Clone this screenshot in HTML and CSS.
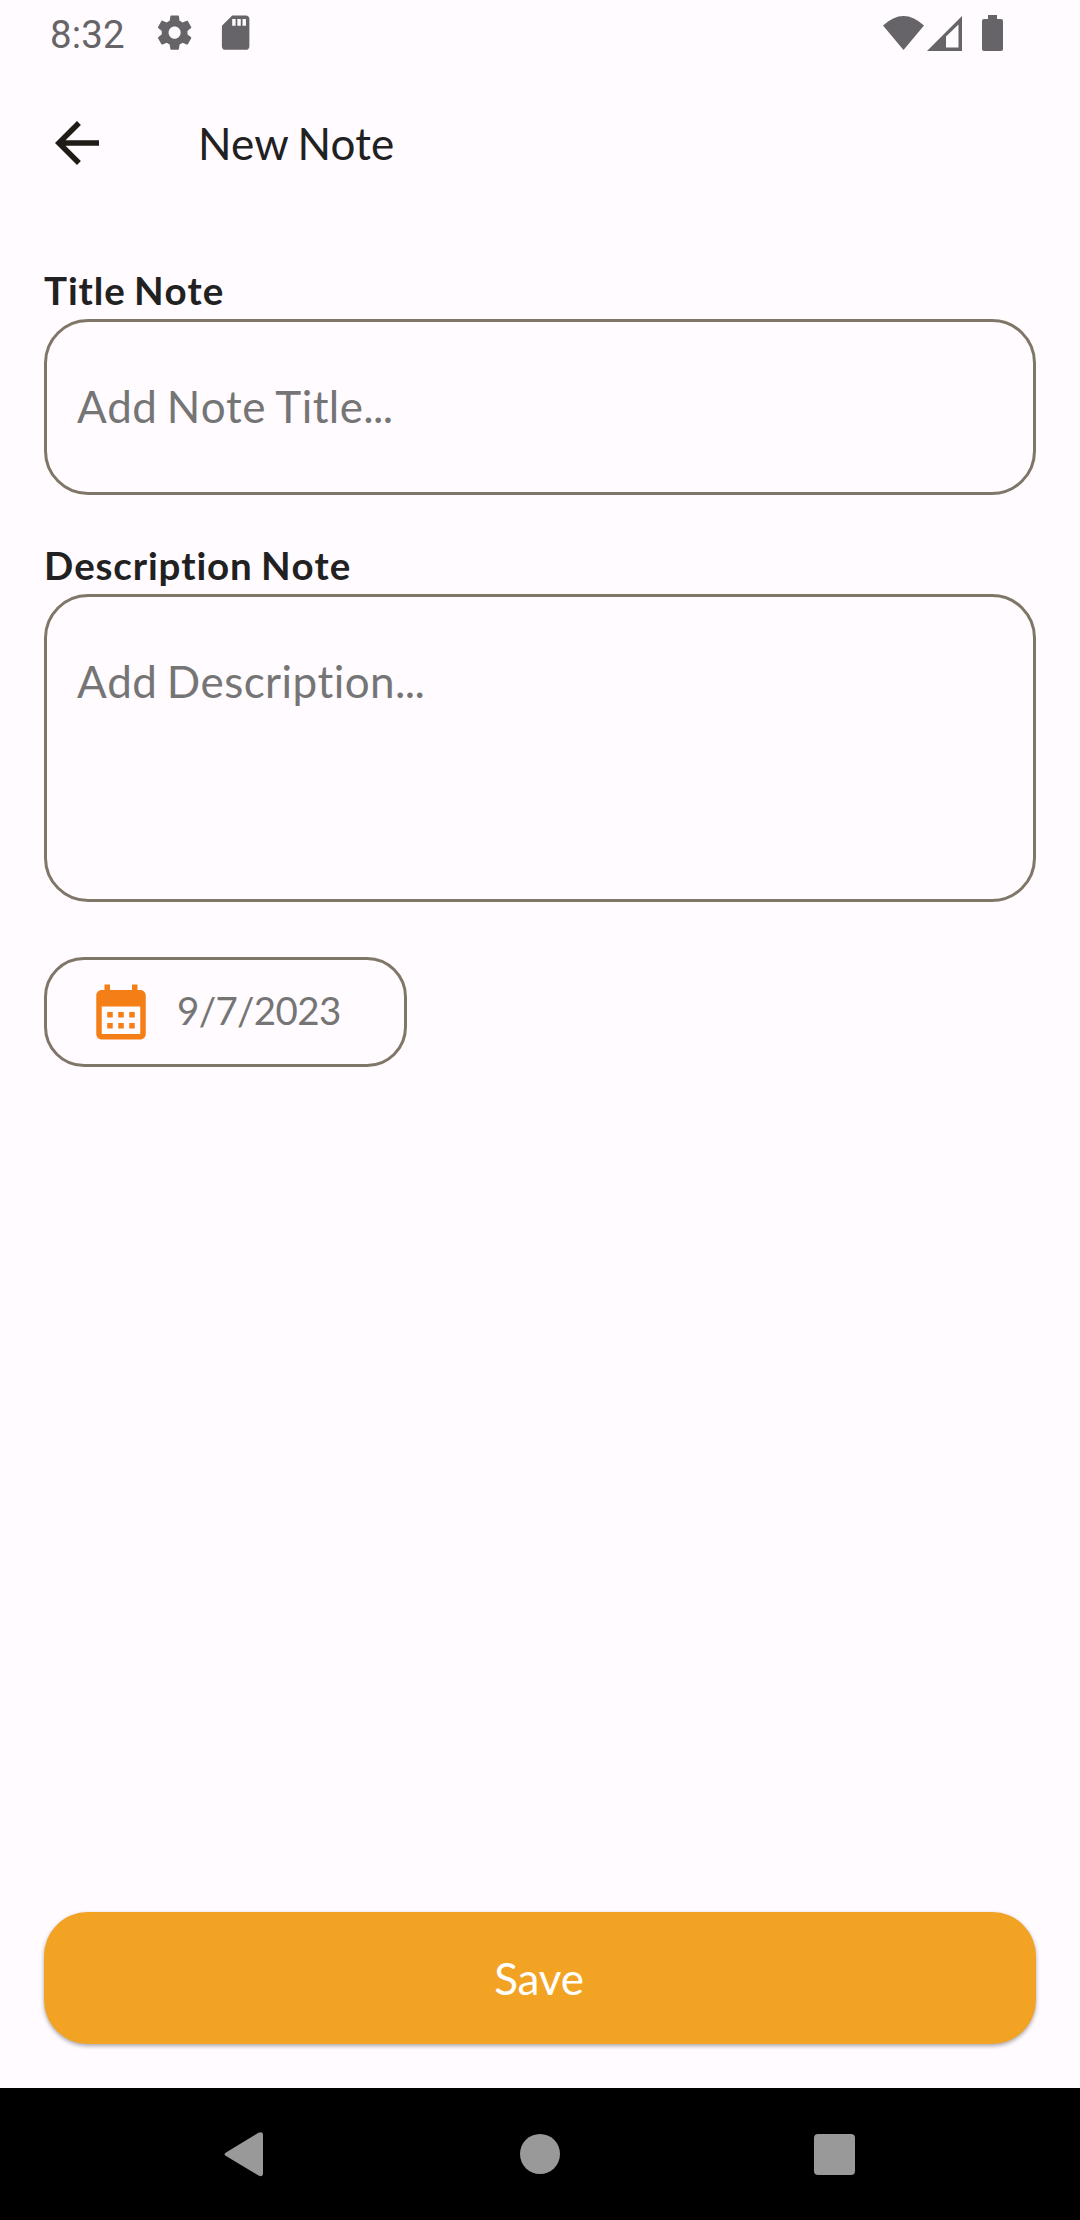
FILE: index.html
```html
<!DOCTYPE html>
<html lang="en">
<head>
<meta charset="utf-8">
<title>New Note</title>
<link rel="stylesheet" href="styles.css">
</head>
<body>
<div class="screen">
  <header class="status">
    <span class="clock">8:32</span>
    <svg class="gear" viewBox="0 0 24 24"><path d="M19.43 12.98c.04-.32.07-.64.07-.98s-.03-.66-.07-.98l2.11-1.65c.19-.15.24-.42.12-.64l-2-3.46c-.12-.22-.39-.3-.61-.22l-2.49 1c-.52-.4-1.08-.73-1.69-.98l-.38-2.65C14.46 2.18 14.25 2 14 2h-4c-.25 0-.46.18-.49.42l-.38 2.65c-.61.25-1.17.59-1.69.98l-2.49-1c-.23-.09-.49 0-.61.22l-2 3.46c-.13.22-.07.49.12.64l2.11 1.65c-.04.32-.07.65-.07.98s.03.66.07.98l-2.11 1.65c-.19.15-.24.42-.12.64l2 3.46c.12.22.39.3.61.22l2.49-1c.52.4 1.08.73 1.69.98l.38 2.65c.03.24.24.42.49.42h4c.25 0 .46-.18.49-.42l.38-2.65c.61-.25 1.17-.59 1.69-.98l2.49 1c.23.09.49 0 .61-.22l2-3.46c.12-.22.07-.49-.12-.64l-2.11-1.65zM12 15.5c-1.93 0-3.5-1.57-3.5-3.5s1.57-3.5 3.5-3.5 3.5 1.57 3.5 3.5-1.57 3.5-3.5 3.5z"/></svg>
    <svg class="sdcard" viewBox="0 0 24 24"><path d="M18 2h-8L4.02 8 4 20c0 1.100.9 2 2 2h12c1.100 0 2-.9 2-2V4c0-1.100-.9-2-2-2zm-6 6h-2V4h2v4zm3 0h-2V4h2v4zm3 0h-2V4h2v4z"/></svg>
    <div class="signals">
      <svg class="wifi" viewBox="0 0 41 34"><path d="M0 9.500Q20.500-9.500 41 9.500L20.500 34Z"/></svg>
      <svg class="cell" viewBox="0 0 35 35"><path fill-rule="evenodd" d="M35 0V35H0ZM31.500 8.500 19 20.500V31.500H31.500Z"/></svg>
      <svg class="battery" viewBox="0 0 21 36"><path d="M6 0h9v4h4q2 0 2 2v28q0 2-2 2H2q-2 0-2-2V6q0-2 2-2h4Z"/></svg>
    </div>
  </header>
  <nav class="appbar">
    <svg class="back" viewBox="0 0 24 24"><path d="M20 11H7.830l5.590-5.590L12 4l-8 8 8 8 1.410-1.410L7.830 13H20v-2z"/></svg>
    <h1 class="heading">New Note</h1>
  </nav>
  <main class="form">
    <section class="group">
      <h2 class="label">Title Note</h2>
      <div class="field">Add Note Title<span class="dots">...</span></div>
    </section>
    <section class="group">
      <h2 class="label">Description Note</h2>
      <div class="field tall">Add Description<span class="dots">...</span></div>
    </section>
    <div class="date">
      <svg class="calendar" viewBox="0 0 24 24"><path d="M19 4h-1V2h-2v2H8V2H6v2H5c-1.110 0-1.990.9-1.990 2L3 20c0 1.100.890 2 2 2h14c1.100 0 2-.9 2-2V6c0-1.100-.9-2-2-2zm0 16H5V10h14v10zM9 14H7v-2h2v2zm4 0h-2v-2h2v2zm4 0h-2v-2h2v2zm-8 4H7v-2h2v2zm4 0h-2v-2h2v2zm4 0h-2v-2h2v2z"/></svg>
      <span class="day">9/7/2023</span>
    </div>
    <div class="save">Save</div>
  </main>
  <footer class="navbar">
    <svg class="key" viewBox="0 0 44 48"><path d="M4 22.500 36.500 2.800Q41 1 41 5V43.500Q41 47.500 36.500 45.500L4 26Q1 24.250 4 22.500Z"/></svg>
    <span class="home"></span>
    <span class="recent"></span>
  </footer>
</div>
</body>
</html>
```
FILE: styles.css
```css
* { box-sizing: border-box; }
body { margin: 0; background: #fffbff; }
svg { display: block; flex: none; }
.screen {
  width: 1080px;
  height: 2220px;
  display: flex;
  flex-direction: column;
  background: #fffbff;
  color: #212121;
  font-family: Lato, sans-serif;
  font-size: 44px;
}
.status {
  height: 66px;
  flex: none;
  display: flex;
  align-items: center;
  padding: 0 77px 0 50px;
  color: #666468;
  fill: #666468;
}
.clock { width: 104px; font: 38.5px/66px Roboto, sans-serif; padding-top: 3px; letter-spacing: 0.15px; }
.gear, .sdcard { width: 41.250px; height: 41.250px; }
.sdcard { margin-left: 19.500px; }
.signals { display: flex; align-items: center; margin-left: auto; }
.wifi { width: 41px; height: 34px; }
.cell { width: 35px; height: 35px; margin-left: 3.500px; }
.battery { width: 21px; height: 36px; margin-left: 20px; }
.appbar {
  height: 154px;
  flex: none;
  display: flex;
  align-items: center;
  padding: 0 44px;
}
.back { width: 66px; height: 66px; fill: #1f1b16; }
.heading {
  margin: 0 0 0 88px;
  font-size: 44px;
  font-weight: 400;
  line-height: 56px;
  letter-spacing: 0.15px;
  word-spacing: -2px;
}
.form {
  flex: 1;
  display: flex;
  flex-direction: column;
  padding: 44px;
}
.group { display: flex; flex-direction: column; margin-bottom: 44px; }
.label {
  margin: 0;
  height: 55px;
  font-size: 38.5px;
  font-weight: 700;
  line-height: 53px;
  letter-spacing: 0.85px;
  word-spacing: -1.8px;
  font-kerning: none;
}
.field {
  height: 176px;
  border: 3px solid #7f7667;
  border-radius: 44px;
  padding: 56px 30px;
  line-height: 56px;
  letter-spacing: 0.4px;
  word-spacing: -2.2px;
  font-kerning: none;
  color: #757575;
}
.dots { letter-spacing: -0.6px; }
.tall { height: 308px; }
.date {
  width: 363px;
  height: 110px;
  margin-top: 11px;
  display: flex;
  align-items: center;
  gap: 23px;
  padding-left: 41px;
  border: 3px solid #7f7667;
  border-radius: 40px;
  color: #757575;
  font-size: 38.5px;
}
.day { padding-bottom: 4px; letter-spacing: -0.65px; }
.calendar { width: 66px; height: 66px; fill: #f57f17; }
.save {
  height: 132px;
  margin-top: auto;
  padding-right: 2px;
  border-radius: 44px;
  background: #f2a324;
  color: #fff;
  line-height: 133px;
  text-align: center;
  letter-spacing: -0.2px;
  box-shadow: 0 2px 4px rgba(0, 0, 0, 0.35);
}
.navbar {
  height: 132px;
  flex: none;
  display: flex;
  align-items: center;
  padding-left: 222px;
  background: #000;
}
.key { width: 44px; height: 48px; fill: #999; }
.home { width: 40px; height: 40px; margin-left: 254px; border-radius: 50%; background: #999; }
.recent { width: 41px; height: 41px; margin-left: 254px; border-radius: 4px; background: #999; }
```
